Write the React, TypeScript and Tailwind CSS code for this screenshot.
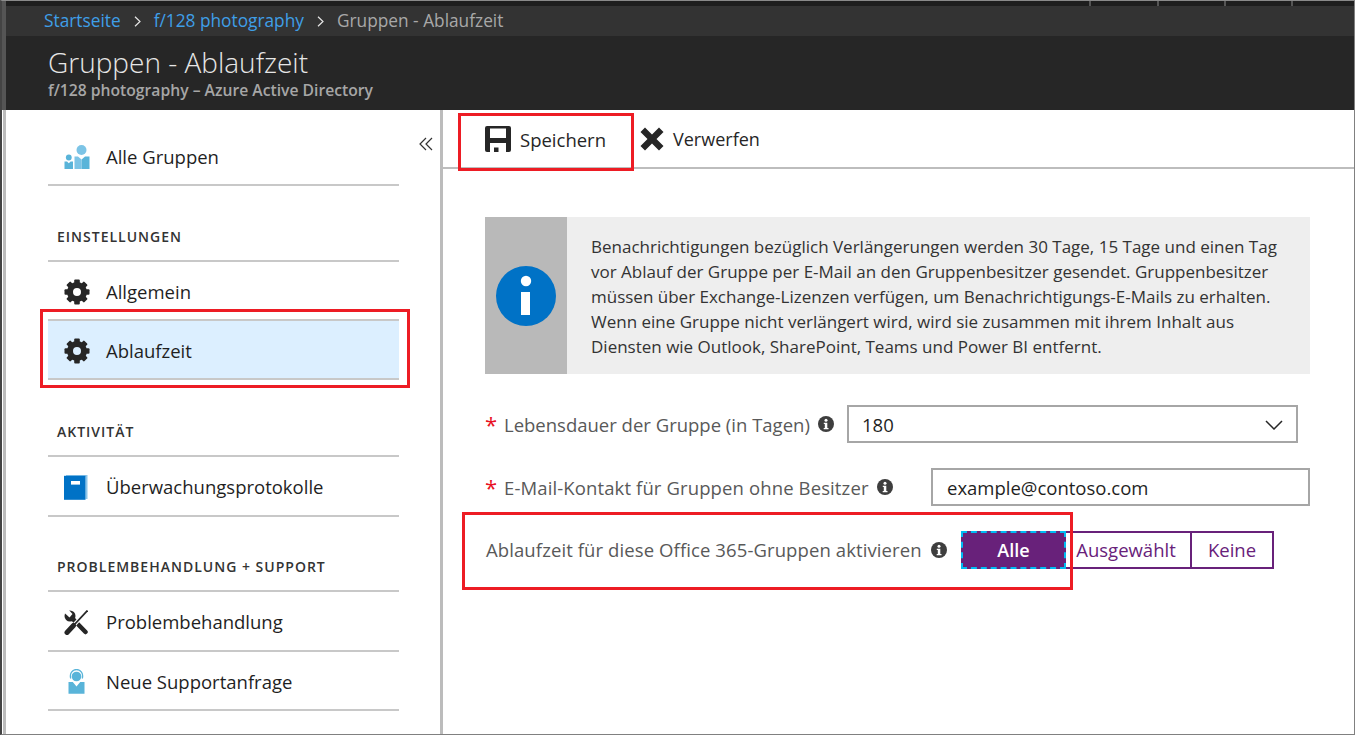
const font = "font-['Open_Sans','Noto_Sans',sans-serif]";

function GearIcon() {
  return (
    <svg viewBox="0 0 26 26" className="h-[26px] w-[26px] shrink-0">
      {[0, 45, 90, 135, 180, 225, 270, 315].map((a) => (
        <rect key={a} x="10.2" y="0.5" width="5.6" height="6" rx="1" fill="#262626" transform={`rotate(${a} 13 13)`} />
      ))}
      <circle cx="13" cy="13" r="7" fill="none" stroke="#262626" strokeWidth="6" />
    </svg>
  );
}

function GroupsIcon() {
  return (
    <svg viewBox="0 0 26 26" className="h-[26px] w-[26px] shrink-0">
      <circle cx="17.5" cy="6" r="5" fill="#7cc4e6" />
      <path d="M10.5 12.5h3.5l3.5 3 .1 9.5h-7.1z" fill="#7cc4e6" />
      <path d="M17.6 15.5l3.4-3h4.5V25h-7.9z" fill="#59b4d9" />
      <circle cx="4.8" cy="13.5" r="2.9" fill="#59b4d9" />
      <path d="M0.5 17.5h2.5l1.8 1.7 1.8-1.7h2.4V25H.5z" fill="#59b4d9" />
    </svg>
  );
}

function BookIcon() {
  return (
    <svg viewBox="0 0 24 25" className="h-[25px] w-[24px] shrink-0">
      <path d="M2 0h21.500v24h-2V1.500H2z" fill="#8cc6ea" />
      <rect x="0" y="0.800" width="21.500" height="24" fill="#0072c6" />
      <rect x="7" y="6" width="9" height="3.600" fill="#ffffff" />
    </svg>
  );
}

function ToolsIcon() {
  return (
    <svg viewBox="0 0 24 25" className="h-[25px] w-[24px] shrink-0" fill="none">
      <circle cx="6" cy="6" r="5.500" fill="#262626" />
      <path d="M7 7l14.500 15" stroke="#262626" strokeWidth="4.500" strokeLinecap="round" />
      <path d="M-1 1.500L5.500 7.500 8.500 4 3 -2z" fill="#ffffff" />
      <path d="M22.500 1.500L10 15" stroke="#ffffff" strokeWidth="4" />
      <path d="M23.500.500L10 15" stroke="#262626" strokeWidth="1.800" />
      <path d="M9.500 15.500L3 22.500" stroke="#262626" strokeWidth="5" strokeLinecap="round" />
    </svg>
  );
}

function SupportIcon() {
  return (
    <svg viewBox="0 0 17 25" className="h-[25px] w-[17px] shrink-0">
      <path d="M2.800 9.500C1.200 4.500 4.500.500 8.500.500s7.300 4 5.700 9" fill="none" stroke="#59b4d9" strokeWidth="1.300" />
      <circle cx="8.500" cy="7.500" r="4.800" fill="#59b4d9" />
      <path d="M0.500 13h4.300l3.700 4.500L12.200 13h4.300v11.800H.5z" fill="#59b4d9" />
    </svg>
  );
}

function SmallInfo() {
  return (
    <svg viewBox="0 0 16 16" className="h-4 w-4 shrink-0">
      <circle cx="8" cy="8" r="8" fill="#3e3e3e" />
      <circle cx="8" cy="4.200" r="1.500" fill="#ffffff" />
      <path d="M5.800 6.800h3.500v5.200h1.200v1.300h-4.800V12h1.100V8.100h-1z" fill="#ffffff" />
    </svg>
  );
}

function Chevron() {
  return (
    <svg viewBox="0 0 7 11" className="mx-[13px] h-[11px] w-[7px] shrink-0" fill="none" stroke="#e6e6e6" strokeWidth="1.200">
      <path d="M1 .7l5 4.800-5 4.800" />
    </svg>
  );
}

function Divider() {
  return <div className="h-[2px] bg-[#c8c8c8]" />;
}

function NavRow({ icon, label, active, className }: { icon: React.ReactNode; label: string; active?: boolean; className?: string }) {
  return (
    <div className={`flex items-center pt-[2px] pl-[16px] ${className ?? "h-[57px]"} ${active ? "bg-[#dcefff]" : ""}`}>
      <div className="flex w-[42px] shrink-0">{icon}</div>
      <span className="text-[18.5px] text-[#1f1f1f]">{label}</span>
    </div>
  );
}

function SectionTitle({ children, className }: { children: React.ReactNode; className: string }) {
  return <div className={`pl-[9px] text-[14px] leading-[18px] font-semibold tracking-[1px] text-[#333333] ${className}`}>{children}</div>;
}

function Sidebar() {
  return (
    <aside className="relative ml-[1px] w-[440px] shrink-0 border-x-[3px] border-[#bcbcbc] pr-[41px] pl-[42px]">
      <svg viewBox="0 0 14 14" className="absolute top-[27px] left-[413px] h-[14px] w-[14px]" fill="none" stroke="#333333" strokeWidth="1.200">
        <path d="M7 1L1 7l6 6M13 1L7 7l6 6" />
      </svg>
      <div className="pt-[17px]">
        <NavRow icon={<GroupsIcon />} label="Alle Gruppen" />
        <Divider />
      </div>
      <SectionTitle className="mt-[42px] mb-[14px]">EINSTELLUNGEN</SectionTitle>
      <Divider />
      <NavRow icon={<GearIcon />} label="Allgemein" />
      <div className="relative">
        <Divider />
        <NavRow icon={<GearIcon />} label="Ablaufzeit" active />
        <Divider />
        <div className="absolute -top-[10px] -right-[11px] -bottom-[8px] -left-[8px] border-[3px] border-[#ed1c24]" />
      </div>
      <SectionTitle className="mt-[43px] mb-[14px]">AKTIVITÄT</SectionTitle>
      <Divider />
      <NavRow icon={<BookIcon />} label="Überwachungsprotokolle" className="h-[58px]" />
      <Divider />
      <SectionTitle className="mt-[41px] mb-[14px]">PROBLEMBEHANDLUNG + SUPPORT</SectionTitle>
      <Divider />
      <NavRow icon={<ToolsIcon />} label="Problembehandlung" className="h-[58px]" />
      <Divider />
      <NavRow icon={<div className="ml-[4px]"><SupportIcon /></div>} label="Neue Supportanfrage" />
      <Divider />
    </aside>
  );
}

function Toolbar() {
  return (
    <div className="flex h-[59px] items-center border-b-2 border-[#bdbdbd]">
      <div className="relative ml-[42px] flex items-center">
        <svg viewBox="0 0 26 26" className="h-[26px] w-[26px] shrink-0" fill="#262626" fillRule="evenodd">
          <path d="M2 0h22a2 2 0 0 1 2 2v22a2 2 0 0 1-2 2H2a2 2 0 0 1-2-2V2a2 2 0 0 1 2-2zM5 2.500v9.500h16V2.500zM5 17v9h16V17zM9 21.500h4.500V26H9z" />
        </svg>
        <span className="mt-[2px] ml-[9px] text-[18.5px] text-[#262626]">Speichern</span>
        <div className="absolute -top-[11px] -right-[28px] -bottom-[18px] -left-[27px] border-[3px] border-[#ed1c24]" />
      </div>
      <div className="ml-[34px] flex items-center">
        <svg viewBox="0 0 24 24" className="h-6 w-6 shrink-0" fill="#262626">
          <path d="M5 .5l7 7 7-7 4.500 4.500-7 7 7 7-4.500 4.500-7-7-7 7L.5 19l7-7-7-7z" />
        </svg>
        <span className="mt-[2px] ml-[9px] text-[18px] text-[#262626]">Verwerfen</span>
      </div>
    </div>
  );
}

function Notice() {
  return (
    <div className="flex h-[157px] w-[825px] bg-[#eeeeee]">
      <div className="flex w-[82px] shrink-0 items-center justify-center bg-[#b9b9b9]">
        <svg viewBox="0 0 60 60" className="h-[60px] w-[60px]">
          <circle cx="30" cy="30" r="30" fill="#0072c6" />
          <circle cx="30" cy="15" r="5.200" fill="#ffffff" />
          <rect x="25" y="26" width="9" height="23" fill="#ffffff" />
        </svg>
      </div>
      <p className="pt-[17px] pl-[24px] text-[17px] leading-[25px] whitespace-nowrap text-[#333333]">
        Benachrichtigungen bezüglich Verlängerungen werden 30 Tage, 15 Tage und einen Tag
        <br />
        vor Ablauf der Gruppe per E-Mail an den Gruppenbesitzer gesendet. Gruppenbesitzer
        <br />
        müssen über Exchange-Lizenzen verfügen, um Benachrichtigungs-E-Mails zu erhalten.
        <br />
        Wenn eine Gruppe nicht verlängert wird, wird sie zusammen mit ihrem Inhalt aus
        <br />
        Diensten wie Outlook, SharePoint, Teams und Power BI entfernt.
      </p>
    </div>
  );
}

function Form() {
  return (
    <div className="mt-[31px] w-[825px] text-[18.5px] text-[#595959]">
      <div className="flex h-[38px] items-center">
        <span className="w-[19px] text-[22px] leading-none text-[#e81123]">*</span>
        <span className="mt-[2px] w-[314px] whitespace-nowrap">Lebensdauer der Gruppe (in Tagen)</span>
        <SmallInfo />
        <div className="ml-[13px] flex h-[38px] w-[451px] items-center justify-between border-2 border-[#a6a6a6] pt-[2px] pr-[13px] pl-[13px] text-[#1f1f1f]">
          180
          <svg viewBox="0 0 18 10" className="h-[10px] w-[18px]" fill="none" stroke="#262626" strokeWidth="1.500">
            <path d="M1 1l8 8 8-8" />
          </svg>
        </div>
      </div>
      <div className="mt-[25px] flex h-[38px] items-center">
        <span className="w-[19px] text-[22px] leading-none text-[#e81123]">*</span>
        <span className="mt-[2px] w-[373px] whitespace-nowrap tracking-[0.12px]">E-Mail-Kontakt für Gruppen ohne Besitzer</span>
        <SmallInfo />
        <div className="ml-[38px] flex h-[38px] w-[379px] items-center border-2 border-[#a6a6a6] pt-[2px] pl-[14px] text-[#1f1f1f]">example@contoso.com</div>
      </div>
      <div className="relative mt-[25px] flex h-[38px] items-center">
        <span className="ml-[1px] w-[445px] whitespace-nowrap tracking-[0.1px]">Ablaufzeit für diese Office 365-Gruppen aktivieren</span>
        <SmallInfo />
        <div className="ml-[14px] flex h-[38px] text-[#68217a]">
          <div className="flex w-[105px] items-center justify-center border-2 border-dashed border-[#00bcf2] bg-[#68217a] text-[18px] font-semibold text-white">Alle</div>
          <div className="flex w-[126px] items-center justify-center border-y-2 border-r-2 border-[#68217a] pr-[4px]">Ausgewählt</div>
          <div className="flex w-[82px] items-center justify-center border-y-2 border-r-2 border-[#68217a]">Keine</div>
        </div>
        <div className="absolute -top-[19px] -bottom-[21px] -left-[23px] w-[611px] border-[3px] border-[#ed1c24]" />
      </div>
    </div>
  );
}

export default function App() {
  return (
    <div className={`flex h-[735px] w-full flex-col overflow-hidden border-t border-r border-b border-l-2 border-t-[#8a8a8a] border-r-[#808080] border-b-[#808080] border-l-[#444444] bg-white ${font}`}>
      <div className="flex h-[5px] shrink-0 justify-end border-l-4 border-[#555555] bg-[#1e1e1e]">
        <div className="w-[68px] border-l-2 border-[#555555]" />
        <div className="w-[67px] border-l-2 border-[#555555]" />
        <div className="w-[67px] border-l-2 border-[#555555]" />
        <div className="w-[63px] border-l-2 border-[#555555]" />
      </div>
      <div className="flex h-[30px] shrink-0 items-center border-l-4 border-[#555555] bg-[#333333] pl-[38px] text-[17.3px] text-[#a8a8a8]">
        <span className="text-[#3f9fe8]">Startseite</span>
        <Chevron />
        <span className="text-[#3f9fe8]">f/128 photography</span>
        <Chevron />
        <span>Gruppen - Ablaufzeit</span>
      </div>
      <div className="flex h-[74px] shrink-0 flex-col border-l-4 border-[#555555] bg-[#262626] pt-[9px] pl-[42px]">
        <div className="text-[28px] leading-[34px] font-light text-[#e6e6e6]">Gruppen - Ablaufzeit</div>
        <div className="mt-[2px] text-[15.7px] leading-[18px] font-semibold text-[#a6a6a6]">f/128 photography – Azure Active Directory</div>
      </div>
      <div className="flex min-h-0 flex-1">
        <Sidebar />
        <main className="min-w-0 flex-1">
          <Toolbar />
          <div className="pt-[48px] pl-[42px]">
            <Notice />
            <Form />
          </div>
        </main>
      </div>
    </div>
  );
}
